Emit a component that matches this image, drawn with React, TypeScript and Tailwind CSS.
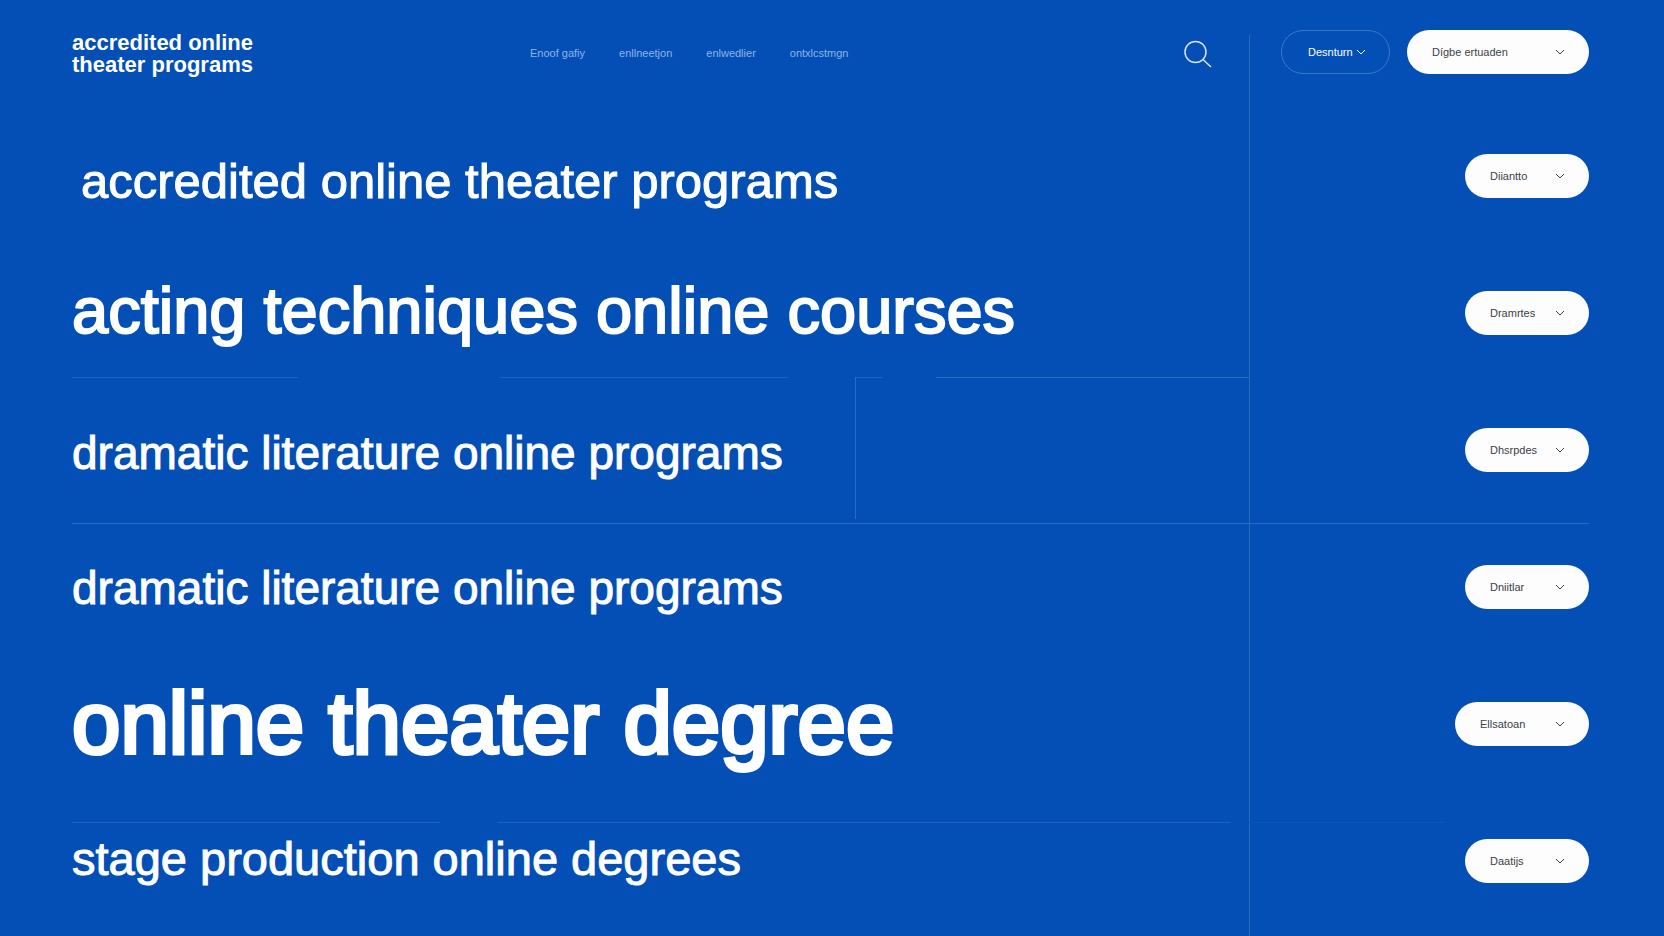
import React from 'react';
import clsx from 'clsx';

interface PillSelectProps {
  label: string;
  value: string;
  outline?: boolean;
  className?: string;
}

const programs = [
  {
    title: 'accredited online theater programs',
    row: 'h-[148px] pl-[9px] pb-0.5',
    text: 'text-[49px] [-webkit-text-stroke:1px_white]',
  },
  {
    title: 'acting techniques online courses',
    row: 'h-[121px] pb-3',
    text: 'text-[65px] [-webkit-text-stroke:2px_white]',
    divider: 'split',
  },
  {
    title: 'dramatic literature online programs',
    row: 'h-[145px] pt-1',
    text: 'text-[46px] [-webkit-text-stroke:1px_white]',
    divider: 'full',
  },
  {
    title: 'dramatic literature online programs',
    row: 'h-[128px]',
    text: 'text-[46px] [-webkit-text-stroke:1px_white]',
  },
  {
    title: 'online theater degree',
    row: 'h-[170px] pb-[30px]',
    text: 'text-[87px] [-webkit-text-stroke:4px_white]',
    divider: 'broken',
  },
  {
    title: 'stage production online degrees',
    row: 'h-[72px] pb-0.5',
    text: 'text-[47px] [-webkit-text-stroke:1px_white]',
  },
];

const filters = [
  { value: 'Diiantto', width: 'w-[124px]' },
  { value: 'Dramrtes', width: 'w-[124px]' },
  { value: 'Dhsrpdes', width: 'w-[124px]' },
  { value: 'Dniitlar', width: 'w-[124px]' },
  { value: 'Ellsatoan', width: 'w-[134px]' },
  { value: 'Daatijs', width: 'w-[124px]' },
];

const navItems = ['Enoof gafiy', 'enllneetjon', 'enlwedlier', 'ontxlcstmgn'];

const Chevron: React.FC<{ className?: string }> = ({ className }) => (
  <svg
    viewBox="0 0 10 6"
    className={clsx('pointer-events-none absolute top-1/2 h-1.5 w-2.5 -translate-y-1/2', className)}
    fill="none"
    stroke="currentColor"
    aria-hidden="true"
  >
    <path d="M1 1l4 4 4-4" />
  </svg>
);

const PillSelect: React.FC<PillSelectProps> = ({ label, value, outline, className }) => (
  <div className={clsx('relative shrink-0', className)}>
    <select
      aria-label={label}
      className={clsx(
        'h-11 w-full cursor-pointer appearance-none rounded-full text-[11px]',
        outline
          ? 'border border-[#3a78ca] bg-transparent pl-[26px] text-white'
          : 'bg-[#fdfdfe] pl-[25px] text-[#3c4148]'
      )}
    >
      <option>{value}</option>
    </select>
    <Chevron className={outline ? 'right-6 text-white' : 'right-6 text-[#3c4148]'} />
  </div>
);

const Divider: React.FC<{ type?: string }> = ({ type }) => {
  if (type === 'split') {
    return (
      <div className="flex h-px">
        <div className="grow-[226] bg-[#1c62c1]" />
        <div className="grow-[202]" />
        <div className="grow-[288] bg-[#1c62c1]" />
        <div className="grow-[67]" />
        <div className="relative grow-[28] bg-[#1c62c1]">
          <div className="absolute top-0 left-0 h-[142px] w-px bg-[#2a6bc4]" />
        </div>
        <div className="grow-[53]" />
        <div className="grow-[313] bg-[#2a6bc4]" />
      </div>
    );
  }
  if (type === 'broken') {
    return (
      <div className="flex h-px">
        <div className="grow-[368] bg-[#1c62c1]" />
        <div className="grow-[57]" />
        <div className="grow-[734] bg-[#1c62c1]" />
        <div className="grow-[18]" />
      </div>
    );
  }
  return type === 'full' ? <div className="h-px bg-[#2a6bc4]" /> : null;
};

const App: React.FC = () => {
  return (
    <div className="flex min-h-screen bg-[#044fb6] pr-[75px] pl-[72px] font-['Liberation_Sans',Arial,sans-serif] text-white">
      <div className="min-w-0 flex-1">
        <header className="flex h-[108px] items-center pr-[37px]">
          <a href="#" className="w-[458px] text-[22px] leading-[22px] font-bold">
            accredited online
            <br />
            theater programs
          </a>
          <nav className="flex gap-[34px] pb-0.5 text-[11px] text-[#8db4e8]">
            {navItems.map(item => (
              <a key={item} href="#" className="whitespace-nowrap hover:text-white">
                {item}
              </a>
            ))}
          </nav>
          <button type="button" aria-label="Search" className="ml-auto cursor-pointer">
            <svg viewBox="0 0 28 28" className="size-7" fill="none" stroke="#d6e6fb" strokeWidth="1.5">
              <circle cx="11.5" cy="12" r="10.5" />
              <path d="M19 19.5l8 7.5" />
            </svg>
          </button>
        </header>

        <main>
          {programs.map((program, index) => (
            <section key={index}>
              <div className={clsx('flex items-center', program.row)}>
                <h2 className={clsx('leading-none whitespace-nowrap', program.text)}>{program.title}</h2>
              </div>
              <Divider type={program.divider} />
            </section>
          ))}
        </main>
      </div>

      <aside className="relative w-[340px] shrink-0">
        {/* column rules */}
        <div className="absolute top-[35px] bottom-0 left-0 w-px bg-[#2a6bc4]" />
        <div className="absolute top-[523px] right-0 left-0 h-px bg-[#2a6bc4]" />
        <div className="absolute top-[822px] left-0 h-px w-[196px] bg-[#0c56ba]" />

        <div className="flex h-[104px] items-center justify-end gap-[17px]">
          <PillSelect label="Account" value="Desnturn" outline className="w-[109px]" />
          <PillSelect label="Region" value="Dígbe ertuaden" className="w-[182px]" />
        </div>
        <div className="flex flex-col items-end gap-[93px] pt-[50px]">
          {filters.map((filter, index) => (
            <PillSelect
              key={filter.value}
              label={`Filter ${index + 1}`}
              value={filter.value}
              className={filter.width}
            />
          ))}
        </div>
      </aside>
    </div>
  );
};

export default App;
